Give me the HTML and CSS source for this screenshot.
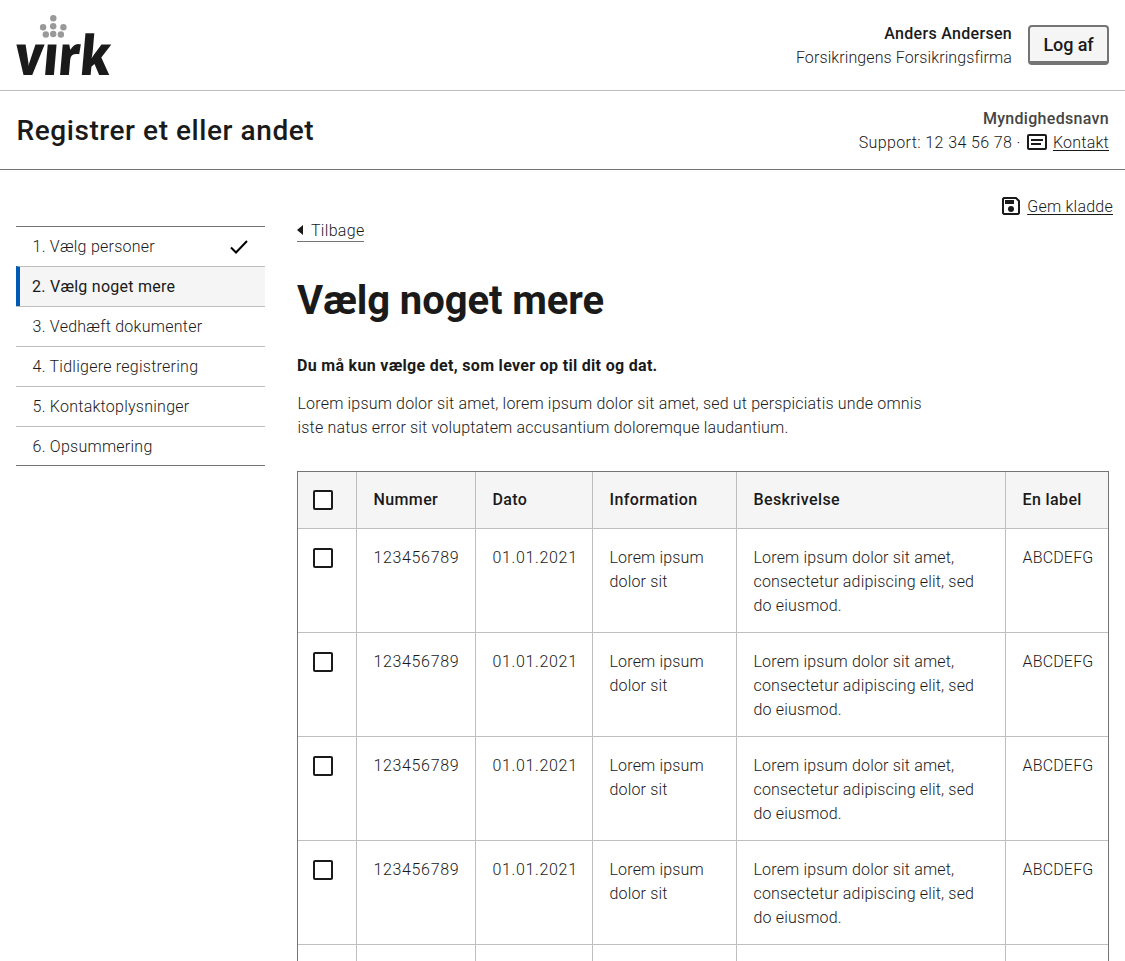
FILE: index.html
```html
<!DOCTYPE html>
<html lang="da">
<head>
<meta charset="utf-8">
<title>Vælg noget mere</title>
<link rel="stylesheet" href="styles.css">
</head>
<body>
<header class="portal">
  <svg class="logo" width="96" height="62" viewBox="0 0 96 62" role="img" aria-label="virk">
    <g fill="#999"><circle cx="37.3" cy="3.2" r="3.2"/><circle cx="27.1" cy="12.2" r="3.2"/><circle cx="37.2" cy="11.2" r="3.2"/><circle cx="47.4" cy="12.2" r="3.2"/><circle cx="29.8" cy="19.5" r="3.2"/><circle cx="37.2" cy="19" r="3.2"/><circle cx="44.9" cy="19.5" r="3.2"/></g>
    <text class="logo-text" transform="translate(-2.3 60) skewX(-5)" x="0" y="0" textLength="95.5" lengthAdjust="spacingAndGlyphs">vırk</text>
  </svg>
  <div class="user">
    <div class="user-text"><b class="medium">Anders Andersen</b><span class="company">Forsikringens Forsikringsfirma</span></div>
    <button class="logout">Log af</button>
  </div>
</header>
<div class="solution">
  <div class="solution-title">Registrer et eller andet</div>
  <div class="authority">
    <b class="medium muted">Myndighedsnavn</b>
    <div class="support"><span class="phone">Support: 12 34 56 78 ·</span>
      <svg class="icon" width="20" height="16" viewBox="0 0 20 16"><rect x="1" y="1" width="18" height="14" rx="1" fill="none" stroke="#1a1a1a" stroke-width="2"/><path d="M4 6h12M4 10h10" stroke="#1a1a1a" stroke-width="2"/></svg>
      <a class="link">Kontakt</a></div>
  </div>
</div>
<main class="page">
  <nav class="steps">
    <a class="step">1. Vælg personer<svg width="18" height="14" viewBox="0 0 18 14"><path d="M1 7.5l5 5L17 1" fill="none" stroke="#000" stroke-width="2"/></svg></a>
    <a class="step current">2. Vælg noget mere</a>
    <a class="step">3. Vedhæft dokumenter</a>
    <a class="step">4. Tidligere registrering</a>
    <a class="step">5. Kontaktoplysninger</a>
    <a class="step">6. Opsummering</a>
  </nav>
  <div class="content">
    <div class="save"><svg class="icon" width="18" height="18" viewBox="0 0 18 18"><path d="M2 1H14L17 4V16L16 17H2L1 16V2Z" fill="none" stroke="#1a1a1a" stroke-width="2"/><path d="M3 3h9v4H3z" fill="#1a1a1a"/><circle cx="9" cy="12" r="3" fill="#1a1a1a"/></svg><a class="link">Gem kladde</a></div>
    <a class="back"><svg class="icon" width="6" height="10" viewBox="0 0 6 10"><path d="M6 0v10L0 5z" fill="#1a1a1a"/></svg>Tilbage</a>
    <h1 class="heading">Vælg noget mere</h1>
    <p class="lead">Du må kun vælge det, som lever op til dit og dat.</p>
    <p class="intro">Lorem ipsum dolor sit amet, lorem ipsum dolor sit amet, sed ut perspiciatis unde omnis iste natus error sit voluptatem accusantium doloremque laudantium.</p>
    <table class="table">
      <colgroup><col class="c1"><col class="c2"><col class="c3"><col class="c4"><col class="c5"><col class="c6"></colgroup>
      <thead><tr><th><i class="box"></i></th><th>Nummer</th><th>Dato</th><th>Information</th><th>Beskrivelse</th><th>En label</th></tr></thead>
      <tbody>
      <tr><td><i class="box"></i></td><td class="num">123456789</td><td class="num">01.01.2021</td><td>Lorem ipsum dolor sit</td><td>Lorem ipsum dolor sit amet, consectetur adipiscing elit, sed do eiusmod.</td><td>ABCDEFG</td></tr>
      <tr><td><i class="box"></i></td><td class="num">123456789</td><td class="num">01.01.2021</td><td>Lorem ipsum dolor sit</td><td>Lorem ipsum dolor sit amet, consectetur adipiscing elit, sed do eiusmod.</td><td>ABCDEFG</td></tr>
      <tr><td><i class="box"></i></td><td class="num">123456789</td><td class="num">01.01.2021</td><td>Lorem ipsum dolor sit</td><td>Lorem ipsum dolor sit amet, consectetur adipiscing elit, sed do eiusmod.</td><td>ABCDEFG</td></tr>
      <tr><td><i class="box"></i></td><td class="num">123456789</td><td class="num">01.01.2021</td><td>Lorem ipsum dolor sit</td><td>Lorem ipsum dolor sit amet, consectetur adipiscing elit, sed do eiusmod.</td><td>ABCDEFG</td></tr>
      <tr class="rest"><td></td><td></td><td></td><td></td><td></td><td></td></tr>
      </tbody>
    </table>
  </div>
</main>
</body>
</html>
```
FILE: styles.css
```css
* { box-sizing: border-box; }
body { margin: 0; height: 961px; overflow: hidden; background: #fff; color: #1a1a1a; font: 300 16px/24px Roboto, sans-serif; letter-spacing: 0.17px; }
.medium { font-weight: 500; letter-spacing: 0.3px; }
.muted { color: #454545; }
.portal { display: flex; justify-content: space-between; height: 91px; padding: 15px 16px 0; border-bottom: 1px solid #bfbfbf; }
.logo { display: block; overflow: visible; }
.logo-text { font: 800 55px "Open Sans", sans-serif; letter-spacing: 0; fill: #1a1a1a; }
.user { display: flex; gap: 16px; padding-top: 7px; }
.user-text { display: flex; flex-direction: column; align-items: flex-end; }
.company { letter-spacing: 0.1px; }
.logout { width: 81px; height: 40px; margin-top: 3px; padding: 1px 0 0; border: 2px solid #747474; border-bottom-width: 4px; border-radius: 4px; background: #f5f5f5; color: #1a1a1a; font: 500 18px/33px Roboto, sans-serif; letter-spacing: -0.11px; }
.solution { display: flex; justify-content: space-between; height: 79px; padding: 16px 16px 0; border-bottom: 1px solid #747474; }
.solution-title { padding-left: 0.5px; font: 500 28px/48px Roboto, sans-serif; letter-spacing: 0.57px; }
.authority { display: flex; flex-direction: column; align-items: flex-end; }
.support { display: flex; align-items: center; gap: 6px; }
.icon { margin-bottom: 2px; }
.phone { letter-spacing: 0.39px; }
.link { text-decoration: underline; text-underline-offset: 2px; letter-spacing: 0.24px; }
.page { display: grid; grid-template-columns: 249px 812px; gap: 32px; padding: 0 16px; }
.steps { margin-top: 56px; letter-spacing: 0.25px; }
.step { display: flex; justify-content: space-between; align-items: center; height: 40px; padding: 1px 17px 0 16.5px; border-top: 1px solid #bfbfbf; }
.step:first-child { border-top-color: #747474; }
.step:last-child { border-bottom: 1px solid #747474; }
.current { padding-left: 12px; border-left: 4px solid #0059b3; background: #f5f5f5; font-weight: 400; letter-spacing: 0.26px; }
.save { display: flex; justify-content: flex-end; align-items: center; gap: 7px; height: 25px; margin: 24px -4px -1px 0; padding-top: 1px; }
.back { display: inline-flex; align-items: center; gap: 8px; height: 24px; padding-top: 2px; border-bottom: 1px solid #747474; vertical-align: top; letter-spacing: 0.3px; }
.heading { margin: 30px 0 0; font: 700 40px/58px Roboto, sans-serif; letter-spacing: -0.09px; }
.lead { margin: 24px 0 14px; font-weight: 700; letter-spacing: 0.31px; }
.intro { margin: 0 0 31px; padding-left: 0.5px; max-width: 640px; letter-spacing: 0.18px; }
.table { table-layout: fixed; width: 812px; border: 1px solid #747474; border-spacing: 0; }
.table th, .table td { padding: 17px 13px 14px 16.5px; border: 0 solid #bfbfbf; border-width: 0 1px 1px 0; text-align: left; vertical-align: top; }
.table th { padding-top: 16px; height: 57px; font-weight: 500; letter-spacing: 0.38px; background: #f5f5f5; }
.table th:last-child, .table td:last-child { padding-right: 0; border-right: 0; }
.table td { height: 104px; }
.table .rest td { height: 18px; padding: 0; border-bottom: 0; }
.table .num { padding-right: 0; letter-spacing: 0.65px; }
.c1 { width: 59px; } .c2 { width: 119px; } .c3 { width: 117px; } .c4 { width: 144px; } .c5 { width: 269px; } .c6 { width: 102px; }
.box { display: block; width: 20px; height: 20px; margin: 2px 0 0 -1.5px; border: 2px solid #1a1a1a; border-radius: 2px; background: #fff; }
```
